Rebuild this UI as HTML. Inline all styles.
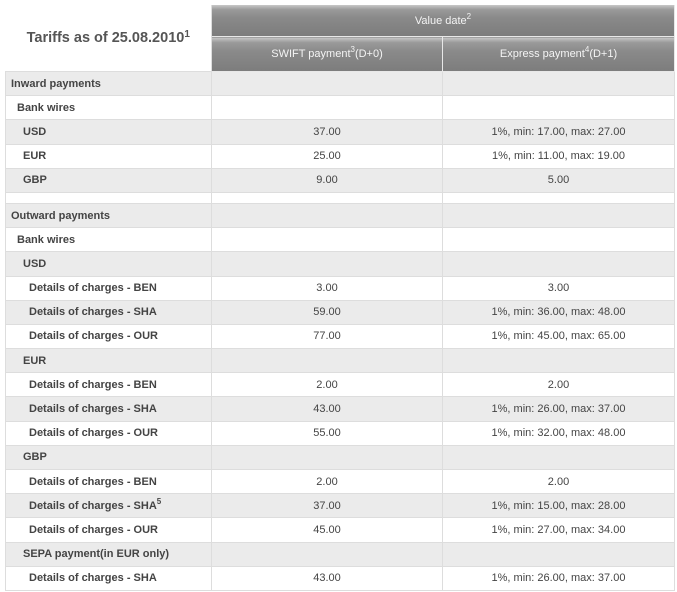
<!DOCTYPE html>
<html><head><style>
body{margin:0;background:#fff;font-family:"Liberation Sans",Tahoma,sans-serif;font-size:11px;color:#444;}
table{position:absolute;left:5px;top:5px;width:669px;border-collapse:collapse;table-layout:fixed;}
td{border:1px solid #ddd;height:23.2px;padding:0;}
td.c{text-align:center}
.h{background:linear-gradient(#c8c8c8 0,#9a9a9a 15%,#8a8a8a 40%,#7c7c7c 100%);color:#f4f4f4;text-align:center;border:1px solid #e8e8e8;border-top:none}
.g td{background:#ebebeb}
.l1{padding-left:5px;font-weight:bold}
.l2{padding-left:11px;font-weight:bold}
.l3{padding-left:17px;font-weight:bold}
.l4{padding-left:23px;font-weight:bold}
sup{font-size:8px;vertical-align:5px;line-height:0}
.t{font-size:14.5px;font-weight:bold;text-align:center;color:#555;background:#fff}
</style></head><body>
<table>
<colgroup><col style="width:206px"><col style="width:231px"><col style="width:232px"></colgroup>
<tr><td class="t" rowspan="2" style="height:66px;border-top:none;border-left:none">Tariffs as of 25.08.2010<sup style="font-size:10px">1</sup></td><td class="h" colspan="2" style="height:31px">Value date<sup>2</sup></td></tr>
<tr><td class="h" style="height:33px">SWIFT payment<sup>3</sup>(D+0)</td><td class="h" style="height:33px">Express payment<sup>4</sup>(D+1)</td></tr>
<tr class="g"><td class="l1">Inward payments</td><td></td><td></td></tr>
<tr><td class="l2">Bank wires</td><td></td><td></td></tr>
<tr class="g"><td class="l3">USD</td><td class="c">37.00</td><td class="c">1%, min: 17.00, max: 27.00</td></tr>
<tr><td class="l3">EUR</td><td class="c">25.00</td><td class="c">1%, min: 11.00, max: 19.00</td></tr>
<tr class="g"><td class="l3">GBP</td><td class="c">9.00</td><td class="c">5.00</td></tr>
<tr><td style="height:10px"></td><td style="height:10px"></td><td style="height:10px"></td></tr>
<tr class="g"><td class="l1">Outward payments</td><td></td><td></td></tr>
<tr><td class="l2">Bank wires</td><td></td><td></td></tr>
<tr class="g"><td class="l3">USD</td><td></td><td></td></tr>
<tr><td class="l4">Details of charges - BEN</td><td class="c">3.00</td><td class="c">3.00</td></tr>
<tr class="g"><td class="l4">Details of charges - SHA</td><td class="c">59.00</td><td class="c">1%, min: 36.00, max: 48.00</td></tr>
<tr><td class="l4">Details of charges - OUR</td><td class="c">77.00</td><td class="c">1%, min: 45.00, max: 65.00</td></tr>
<tr class="g"><td class="l3">EUR</td><td></td><td></td></tr>
<tr><td class="l4">Details of charges - BEN</td><td class="c">2.00</td><td class="c">2.00</td></tr>
<tr class="g"><td class="l4">Details of charges - SHA</td><td class="c">43.00</td><td class="c">1%, min: 26.00, max: 37.00</td></tr>
<tr><td class="l4">Details of charges - OUR</td><td class="c">55.00</td><td class="c">1%, min: 32.00, max: 48.00</td></tr>
<tr class="g"><td class="l3">GBP</td><td></td><td></td></tr>
<tr><td class="l4">Details of charges - BEN</td><td class="c">2.00</td><td class="c">2.00</td></tr>
<tr class="g"><td class="l4">Details of charges - SHA<sup>5</sup></td><td class="c">37.00</td><td class="c">1%, min: 15.00, max: 28.00</td></tr>
<tr><td class="l4">Details of charges - OUR</td><td class="c">45.00</td><td class="c">1%, min: 27.00, max: 34.00</td></tr>
<tr class="g"><td class="l3">SEPA payment(in EUR only)</td><td></td><td></td></tr>
<tr><td class="l4">Details of charges - SHA</td><td class="c">43.00</td><td class="c">1%, min: 26.00, max: 37.00</td></tr>
</table>
</body></html>
